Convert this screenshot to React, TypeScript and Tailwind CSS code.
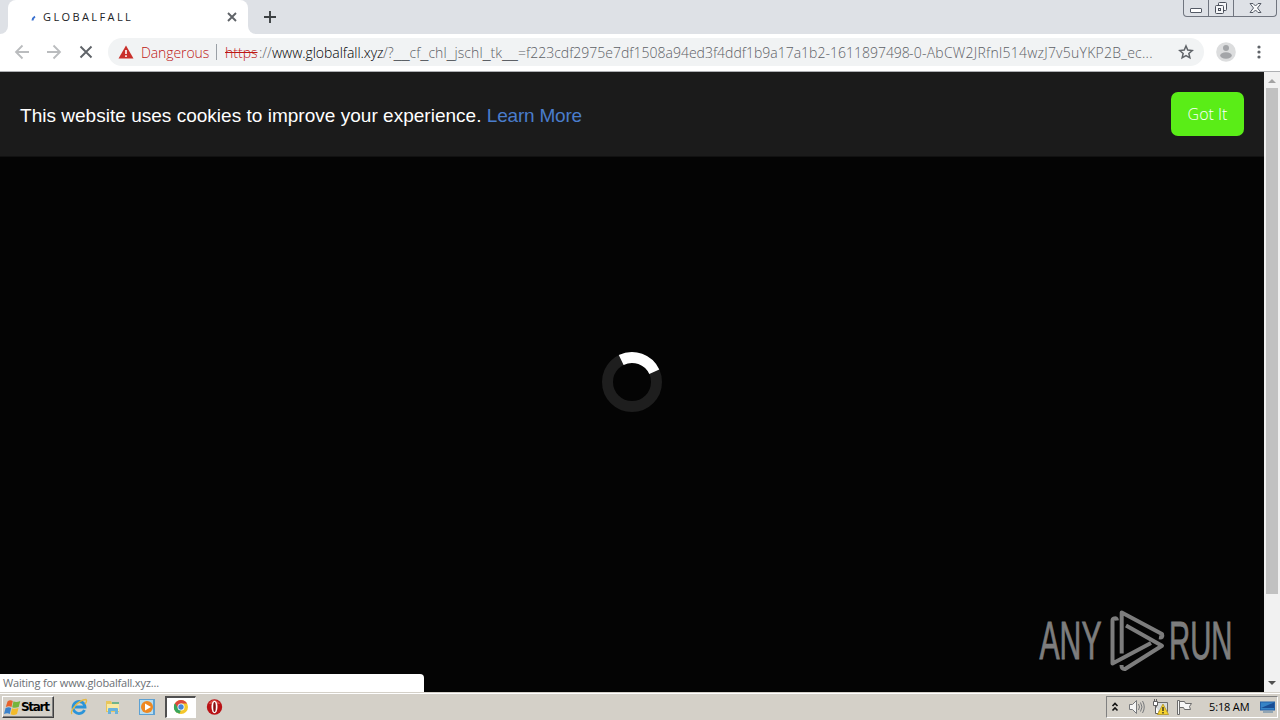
import type { ReactNode } from "react";

function WindowControls() {
  return (
    <div className="ml-auto mr-[3px] flex h-[17px] w-[94px] rounded-b-[4px] border border-t-0 border-[#70757f] bg-[#dee1e6]">
      <div className="flex w-[25px] items-end justify-center border-r border-[#70757f] pb-[3px]">
        <div className="h-[5px] w-[12px] rounded-[1px] border border-[#555b66] bg-white" />
      </div>
      <div className="flex w-[25px] items-center justify-center border-r border-[#70757f]">
        <svg width="14" height="14" viewBox="0 0 14 14" fill="#f5f6f8" stroke="#4b505b">
          <rect x="4.5" y="1.5" width="8" height="8" rx="1" />
          <rect x="1.500" y="4.500" width="8" height="8" rx="1" />
          <rect x="4.500" y="7.500" width="2" height="2" />
        </svg>
      </div>
      <div className="flex flex-1 items-center justify-center">
        <svg width="13" height="12" viewBox="0 0 13 12" fill="#f8f9fa" stroke="#555b66">
          <path d="M1 1.500h3L6.500 4 9 1.500h3L8.500 6l3.500 4.500H9L6.500 8 4 10.500H1L4.500 6z" />
        </svg>
      </div>
    </div>
  );
}

function TabStrip() {
  return (
    <div className="flex h-[34px] bg-[#dee1e6]">
      <div className="flex w-2 items-end bg-white">
        <div className="h-full w-2 rounded-br-lg bg-[#dee1e6]" />
      </div>
      <div className="flex bg-[#dee1e6]">
        <div className="flex w-[240px] items-center rounded-t-lg bg-white pr-[10px] pl-[23px]">
          <svg width="5" height="8" viewBox="0 0 5 8" className="mt-1">
            <path d="M1.500 5.500Q1.600 3 4 1.500" fill="none" stroke="#3b72d0" strokeWidth="2" />
          </svg>
          <span className="ml-[7px] w-[100px] font-['Open_Sans',sans-serif] text-[11px] tracking-[2.400px] whitespace-nowrap text-[#202226]">
            GLOBALFALL
          </span>
          <svg className="ml-auto" width="12" height="12" viewBox="0 0 12 12">
            <path d="M2 2l8 8M10 2l-8 8" stroke="#5f6368" strokeWidth="1.900" />
          </svg>
        </div>
      </div>
      <div className="w-2 bg-white">
        <div className="h-full rounded-bl-lg bg-[#dee1e6]" />
      </div>
      <svg className="mt-[10px] ml-[7px]" width="14" height="14" viewBox="0 0 14 14">
        <path d="M7 1v12M1 7h12" stroke="#3c4043" strokeWidth="1.900" />
      </svg>
      <WindowControls />
    </div>
  );
}

function Underscores({ children }: { children: string }) {
  return <span className="font-['Liberation_Sans',sans-serif] leading-none">{children}</span>;
}

function Toolbar() {
  return (
    <div className="flex h-[38px] items-center border-b border-[#aeb0b3] bg-white pb-px">
      <svg className="ml-[14px]" width="16" height="16" viewBox="0 0 16 16" fill="none" stroke="#babcbe" strokeWidth="1.800">
        <path d="M15 8H2M8.500 1.500L2 8l6.500 6.500" />
      </svg>
      <svg className="ml-4" width="16" height="16" viewBox="0 0 16 16" fill="none" stroke="#babcbe" strokeWidth="1.800">
        <path d="M1 8h13M7.500 1.500L14 8l-6.500 6.500" />
      </svg>
      <svg className="ml-4" width="16" height="16" viewBox="0 0 16 16" fill="none" stroke="#5f6368" strokeWidth="1.900">
        <path d="M2.500 2.500l11 11M13.500 2.500l-11 11" />
      </svg>
      <div className="ml-[14px] flex h-7 w-[1096px] items-center rounded-full bg-[#f1f3f4] pl-[10px] font-['Open_Sans',sans-serif] text-[14px] font-light whitespace-nowrap text-[#5d6166]">
        <svg width="16" height="14" viewBox="0 0 16 14">
          <path d="M8 0.500L15.500 13.500H.5z" fill="#c9302b" />
          <path d="M8 5v4M8 10.200v1.700" stroke="#fff" strokeWidth="1.600" />
        </svg>
        <span className="ml-[7px] w-[75px] tracking-[-0.100px] text-[#bd1714]">Dangerous</span>
        <span className="h-4 w-px bg-[#9aa0a6]" />
        <span className="ml-2 w-[34px] text-[#bd1714] line-through">https</span>
        <span className="w-[13px]">://</span>
        <span className="w-[111px] tracking-[-0.050px] text-black">www.globalfall.xyz</span>
        <span className="w-[135px] tracking-[0.070px]">
          /?<Underscores>__</Underscores>cf<Underscores>_</Underscores>chl<Underscores>_</Underscores>jschl
          <Underscores>_</Underscores>tk<Underscores>__</Underscores>
        </span>
        <span className="w-[391px]">=f223cdf2975e7df1508a94ed3f4ddf1b9a17a1b2-1611897498</span>
        <span className="tracking-[0.240px]">-0-AbCW2JRfnl514wzJ7v5uYKP2B_ec...</span>
        <svg className="mr-[10px] ml-auto" width="16" height="16" viewBox="0 0 16 16">
          <path d="M8 2l1.750 4.100 4.450.4-3.350 2.950 1 4.350L8 11.500l-3.850 2.300 1-4.350L1.800 6.500l4.450-.4z" fill="none" stroke="#5f6368" strokeWidth="1.500" />
        </svg>
      </div>
      <svg className="ml-3" width="20" height="20" viewBox="0 0 20 20">
        <circle cx="10" cy="10" r="9.800" fill="#dcddde" />
        <circle cx="10" cy="6" r="3" fill="#a3a5a8" />
        <ellipse cx="10" cy="13.500" rx="5.800" ry="3.200" fill="#a3a5a8" />
      </svg>
      <svg className="ml-5" width="6" height="16" viewBox="0 0 6 16" fill="#5f6368">
        <circle cx="3" cy="3" r="1.600" />
        <circle cx="3" cy="8" r="1.600" />
        <circle cx="3" cy="13" r="1.600" />
      </svg>
    </div>
  );
}

function Watermark() {
  return (
    <svg className="absolute top-[533px] left-[1026px] overflow-visible" width="220" height="72" viewBox="1026 605 220 72">
      <g fill="#7d7d7d" stroke="#7d7d7d" strokeWidth="0.900" fontFamily="'Liberation Sans Narrow','Liberation Sans',sans-serif" fontSize="53">
        <text x="1039.500" y="659" textLength="62" lengthAdjust="spacingAndGlyphs">ANY</text>
        <text x="1169" y="659" textLength="63.500" lengthAdjust="spacingAndGlyphs">RUN</text>
      </g>
      <g fill="none" stroke="#7d7d7d" strokeWidth="4" strokeLinejoin="round">
        <path d="M1121.700 653.500V612.500L1162 634Q1163.500 638 1159 637.300" />
        <path d="M1117 620.500Q1116.500 617.500 1114 618.500Q1112.500 619 1112.500 621V663.500L1151 643" />
        <path d="M1126 625.500L1162 645.800 1125 669Q1121.500 669.500 1121.500 665" />
      </g>
    </svg>
  );
}

function Page() {
  return (
    <main className="relative flex h-[620px] bg-[#040404]">
      <div className="flex w-[1264px] flex-col">
        <div className="flex h-[85px] items-center border-b border-[#111] bg-[#1b1b1b] px-5 font-['Liberation_Sans',sans-serif]">
          <p className="mt-[5px] text-[19px] whitespace-nowrap text-white">
            <span className="tracking-[0.020px]">This website uses cookies to improve your experience. </span>
            <a className="tracking-[-0.200px] text-[#4a7dcc]">Learn More</a>
          </p>
          <button className="ml-auto h-11 w-[73px] rounded-[7px] bg-[#5aed17] pb-px font-['Open_Sans',sans-serif] text-[16px] font-light whitespace-nowrap text-white">
            Got It
          </button>
        </div>
        <div className="flex flex-1 justify-center pt-[194px]">
          <svg width="62" height="62" viewBox="-31 -31 62 62" fill="none" strokeWidth="11">
            <circle r="24.500" stroke="#1e1e1e" />
            <path d="M-10.800-22A24.500 24.500 0 0 1 22.300-10.200" stroke="#fff" />
          </svg>
        </div>
      </div>
      <div className="flex w-4 flex-col items-center bg-[#f1f1f1]">
        <svg width="16" height="16" viewBox="0 0 16 16">
          <path d="M4 11l4-4 4 4z" fill="#a3a3a3" />
        </svg>
        <div className="h-[506px] w-3 bg-[#c1c1c1]" />
        <svg className="mt-auto" width="16" height="16" viewBox="0 0 16 16">
          <path d="M4 5l4 4 4-4z" fill="#505050" />
        </svg>
      </div>
      <Watermark />
      <div className="absolute bottom-0 left-0 flex h-[18px] w-[424px] items-center rounded-tr-[4px] bg-white pl-[3px] font-['Open_Sans',sans-serif] text-[11px] tracking-[-0.180px] whitespace-nowrap text-[#6b6f74]">
        Waiting for www.globalfall.xyz...
      </div>
    </main>
  );
}

function TaskIcon({ children }: { children: ReactNode }) {
  return (
    <svg width="18" height="18" viewBox="0 0 18 18">
      {children}
    </svg>
  );
}

function Taskbar() {
  return (
    <footer className="flex h-7 items-center border-t border-[#d4d0c8] bg-[#d4d0c8] pb-px shadow-[inset_0_1px_0_#fff]">
      <div className="mt-[2px] ml-[2px] flex h-[22px] w-[52px] items-center border border-t-white border-r-[#404040] border-b-[#404040] border-l-white pl-px shadow-[inset_-1px_-1px_0_#808080]">
        <svg width="17" height="17" viewBox="0 0 17 17">
          <path d="M3.500 2.500Q6 .2 8.800 2L7.500 8Q5 6.500 1.800 8z" fill="#e8622b" />
          <path d="M9.500 2.300Q12 4 16.300 2L14.700 8Q11 9.500 8.200 8.200z" fill="#75b53c" />
          <path d="M1.600 9Q5 7.500 7.200 9L5.800 15Q3.500 13.500 0 15z" fill="#3b82cb" />
          <path d="M8 9.200Q11 10.500 14.500 9L13 15Q9.500 16.800 6.600 15.200z" fill="#f3bb2b" />
        </svg>
        <span className="font-['DejaVu_Sans',sans-serif] text-[12px] font-bold tracking-[-1.300px] text-black">Start</span>
      </div>
      <div className="mt-[2px] ml-[16px] flex">
        <TaskIcon>
          <path d="M14.500 12A6 6 0 1 1 15 9H5" fill="none" stroke="#2b94d9" strokeWidth="2.800" />
          <path d="M2 16Q0 14 5 8T16 1.500Q17.500 3 15 6" fill="none" stroke="#e6b941" strokeWidth="1.300" />
        </TaskIcon>
      </div>
      <div className="mt-[2px] ml-4 flex">
        <TaskIcon>
          <path d="M2 3h5l1 2h7v9H2z" fill="#e8c65c" />
          <path d="M3 6h12v7H3z" fill="#f8e9a3" />
          <path d="M4 16v-5q0-1 1-1h8q1 0 1 1v5h-3v-3H7v3z" fill="#68b2dc" />
          <path d="M8 4h7v2H8z" fill="#70b48b" />
        </TaskIcon>
      </div>
      <div className="mt-[2px] ml-4 flex">
        <TaskIcon>
          <path d="M1 1h16v16H1z" fill="#5da1d3" />
          <path d="M2 2h13v14H2z" fill="#b8ddef" />
          <circle cx="9" cy="9" r="6" fill="#ee8821" />
          <path d="M7 5.500v7l6-3.500z" fill="#fff" />
        </TaskIcon>
      </div>
      <div className="mt-[2px] ml-[9px] flex h-[22px] w-[31px] items-center justify-center border-t-2 border-r border-b border-l-2 border-t-[#505050] border-r-white border-b-white border-l-[#505050] bg-white">
        <svg className="-mt-px" width="16" height="16" viewBox="0 0 16 16">
          <circle cx="8" cy="8" r="7" fill="#f4c72b" />
          <path d="M8 8L4 14A7 7 0 0 1 1.900 4.600z" fill="#39a55b" />
          <path d="M1.900 4.600A7 7 0 0 1 14.100 4.600H8L5 9z" fill="#dc483b" />
          <path d="M1.900 4.600L5 10 8 11 6.500 14.800A7 7 0 0 1 1.900 4.600z" fill="#39a55b" />
          <circle cx="8" cy="8" r="3.500" fill="#fff" />
          <circle cx="8" cy="8" r="2.700" fill="#4686d8" />
        </svg>
      </div>
      <div className="mt-[2px] ml-[9px] flex">
        <TaskIcon>
          <circle cx="9.500" cy="9" r="7.700" fill="#b91216" />
          <path d="M3.500 6Q8.500-2 15.500 6" fill="#d94843" />
          <ellipse cx="9.500" cy="9" rx="3" ry="6.200" fill="#fff" />
          <ellipse cx="9.500" cy="9" rx="1.300" ry="5" fill="#881013" />
        </TaskIcon>
      </div>
      <div className="mt-[2px] mr-[2px] ml-auto flex h-[22px] w-[172px] items-center border border-t-[#808080] border-r-white border-b-white border-l-[#808080]">
        <svg className="ml-[4px]" width="8" height="11" viewBox="0 0 8 11" fill="none" stroke="#111" strokeWidth="1.600">
          <path d="M1.500 4L4 1.500 6.500 4M1.500 8.500L4 6l2.500 2.500" />
        </svg>
        <svg className="ml-[9px]" width="17" height="16" viewBox="0 0 17 16" fill="none" stroke="#77797c">
          <path d="M1.500 5.500h3l4-4v13l-4-4h-3z" fill="#f5f5f5" />
          <path d="M10.500 5q2 3 0 6M12.500 3.500q3 4.500 0 9M14.500 2q3.500 6 0 12" />
        </svg>
        <svg className="ml-[7px]" width="17" height="16" viewBox="0 0 17 16">
          <path d="M4.500 3.500h11v9h-11z" fill="#d9dddd" stroke="#6e6e6e" />
          <path d="M1.500 2.500h4v4h-4zM3.500 6.500v8h4M2.500 0v2M4.500 0v2" fill="#fff" stroke="#606060" />
          <path d="M11 5l5.500 10.500h-11z" fill="#f5d22e" stroke="#ad8b13" strokeWidth=".7" />
          <path d="M11 8v4M11 13v1.500" stroke="#222" strokeWidth="1.300" />
        </svg>
        <svg className="ml-[7px]" width="17" height="16" viewBox="0 0 17 16" fill="#f7f7f7" stroke="#6b6b6b">
          <path d="M1.500 1.500h2v14h-2zM3.500 2.500h5l1 2h6l-2 3 1 3h-6l-1-2h-4z" />
        </svg>
        <span className="ml-[16px] w-[42px] font-['Open_Sans',sans-serif] text-[11px] tracking-[-0.150px] whitespace-nowrap text-black">5:18 AM</span>
        <svg className="ml-[9px]" width="16" height="14" viewBox="0 0 16 14">
          <path d="M0 1.500h15v9H0z" fill="#2360a7" />
          <path d="M1 2.500h13v7H1z" fill="#3683c6" />
          <path d="M1 8L14 2.500V8z" fill="#194d94" />
          <path d="M3 12h10" stroke="#7e99ac" strokeWidth="1.500" />
        </svg>
      </div>
    </footer>
  );
}

export default function App() {
  return (
    <div className="h-[720px] w-[1280px] overflow-hidden">
      <TabStrip />
      <Toolbar />
      <Page />
      <Taskbar />
    </div>
  );
}
